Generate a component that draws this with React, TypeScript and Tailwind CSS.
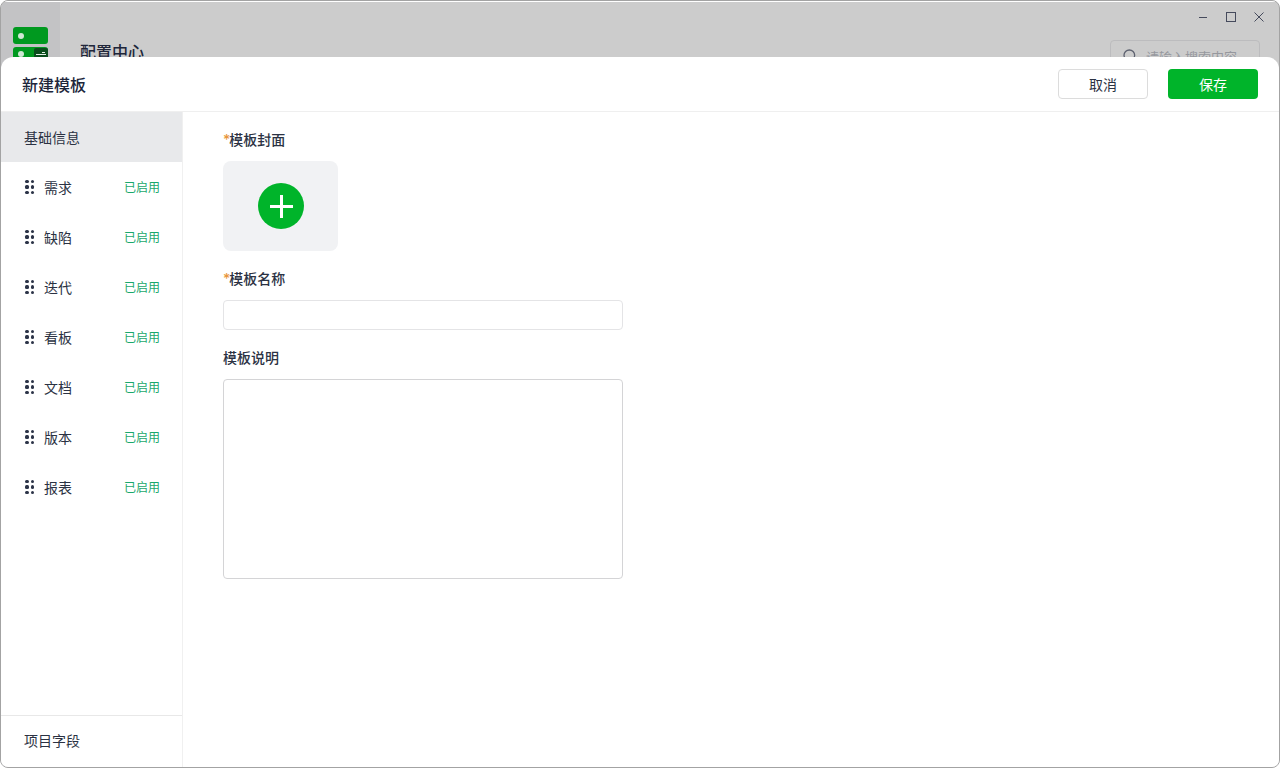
import { Search } from 'lucide-react';

const FONT = "font-['Inter','Noto_Sans_CJK_SC',sans-serif]";
const MODULES = ['需求', '缺陷', '迭代', '看板', '文档', '版本', '报表'];

function DragDots() {
  return (
    <div className="grid w-[9px] grid-cols-2 gap-x-[2px] gap-y-[2px]">
      {[0, 1, 2, 3, 4, 5].map((i) => (
        <span key={i} className="h-[3.5px] w-[3.5px] rounded-[1.5px] bg-[#2b3347]" />
      ))}
    </div>
  );
}

function Label({ text, required }: { text: string; required?: boolean }) {
  return (
    <div className="h-5 text-sm leading-5 font-medium text-[#2b3243]">
      {required && <span className="mr-[-1px] text-[#e8963a]">*</span>}
      {text}
    </div>
  );
}

function WindowControls() {
  return (
    <div className="flex justify-end gap-[18px] pt-[10px] pr-[15px]">
      <svg width="10" height="10" viewBox="0 0 10 10" fill="none" stroke="#454a5c" strokeWidth="1" className="mr-[-1px]">
        <path d="M0 5.5H8" />
      </svg>
      <svg width="10" height="10" viewBox="0 0 10 10" fill="none" stroke="#454a5c" strokeWidth="1">
        <rect x="0.5" y="0.5" width="9" height="9" />
      </svg>
      <svg width="10" height="10" viewBox="0 0 10 10" fill="none" stroke="#454a5c" strokeWidth="1">
        <path d="M0.5 0.5L9.5 9.5M9.5 0.5L0.5 9.5" />
      </svg>
    </div>
  );
}

export default function App() {
  return (
    <div className={`${FONT} relative h-[768px] w-[1280px] overflow-hidden rounded-lg border border-[#a3a3a3] bg-[#cccccc]`}>
      {/* dimmed page behind the modal */}
      <div className="flex h-full border-t border-white">
        <div className="flex w-[59px] flex-col gap-[3px] bg-[#c3c3c5] pt-[25px] pl-3">
          <div className="flex h-[17px] w-[35px] items-center rounded-[3px] bg-[#00991f] pl-[5px]">
            <span className="h-[6px] w-[6px] rounded-full bg-[#cfe8d4]" />
          </div>
          <div className="flex h-[17px] w-[35px] items-start justify-between rounded-[3px] bg-[#00991f] pl-[5px]">
            <span className="mt-[4px] h-[6px] w-[6px] rounded-full bg-[#cfe8d4]" />
            <div className="mt-px h-[15px] w-[14px] rounded-[2px] bg-[#0a4d1c]">
              <svg width="14" height="9" viewBox="0 0 14 9" fill="none" stroke="#e5efe7" strokeWidth="1">
                <path d="M2 6.5H12M8 4.5H11" />
              </svg>
            </div>
          </div>
        </div>
        <div className="flex flex-1 flex-col">
          <WindowControls />
          <div className="mt-[18px] flex items-start justify-between pr-[19px] pl-5">
            <div className="text-base leading-6 font-medium text-[#20263a]">配置中心</div>
            <div className="flex h-[36px] w-[150px] items-center gap-2 rounded border border-[#bcbcbe] px-[11px] text-[13px] text-[#96989e]">
              <Search size={16} className="-mt-[4px] text-[#5e6270]" />
              请输入搜索内容
            </div>
          </div>
        </div>
      </div>

      {/* sliver of the window behind, showing at the very edge */}
      <div className="absolute top-[-1px] left-[719px] h-px w-[170px] bg-[#8d9099]" />

      {/* modal */}
      <div className="absolute inset-x-0 top-[56px] bottom-0 flex flex-col rounded-t-[12px] bg-white">
        <header className="flex h-[55px] flex-none items-center justify-between border-b border-[#efefef] pr-[21px] pl-[21px]">
          <h1 className="pt-px text-base font-medium text-[#20263a]">新建模板</h1>
          <div className="flex gap-5">
            <button className="h-[30px] w-[90px] rounded-[4px] border border-[#dcdcdc] bg-white pt-px text-sm text-[#2b3243]">取消</button>
            <button className="h-[30px] w-[90px] rounded-[4px] bg-[#00b42a] pt-px text-sm text-white">保存</button>
          </div>
        </header>
        <div className="flex min-h-0 flex-1">
          <aside className="flex w-[182px] flex-none flex-col border-r border-[#f0f0f0]">
            <div className="flex h-[50px] flex-none items-center bg-[#e8e9eb] pt-[2px] pl-[23px] text-sm text-[#2b3243]">基础信息</div>
            {MODULES.map((m) => (
              <div key={m} className="flex h-[50px] flex-none items-center pr-[22px] pl-[24px] text-sm text-[#2b3243]">
                <DragDots />
                <span className="ml-[10px] flex-1 pt-[2px]">{m}</span>
                <span className="pt-[2px] text-xs text-[#1aa86c]">已启用</span>
              </div>
            ))}
            <div className="mt-auto flex h-[52px] flex-none items-center border-t border-[#e8e8e8] pb-[2px] pl-[23px] text-sm text-[#2b3243]">项目字段</div>
          </aside>
          <main className="flex-1 pt-[18px] pl-10">
            <Label text="模板封面" required />
            <div className="mt-[11px] flex h-[90px] w-[115px] items-center justify-center rounded-lg bg-[#f1f2f4]">
              <div className="flex h-[46px] w-[46px] items-center justify-center rounded-full bg-[#00b42a]">
                <svg width="23" height="23" viewBox="0 0 23 23" fill="none" stroke="white" strokeWidth="3" className="ml-px">
                  <path d="M11.5 0V23M0 11.5H23" />
                </svg>
              </div>
            </div>
            <div className="mt-[18px]">
              <Label text="模板名称" required />
            </div>
            <input className="mt-[11px] block h-[30px] w-[400px] rounded-[4px] border border-[#e4e4e6] bg-white" />
            <div className="mt-[18px]">
              <Label text="模板说明" />
            </div>
            <textarea className="mt-[11px] block h-[200px] w-[400px] resize-none rounded-[4px] border border-[#d4d4d6] bg-white" />
          </main>
        </div>
      </div>
      <div className="absolute bottom-[-1px] left-[689px] h-px w-[30px] bg-[#8f8a80]" />
    </div>
  );
}
